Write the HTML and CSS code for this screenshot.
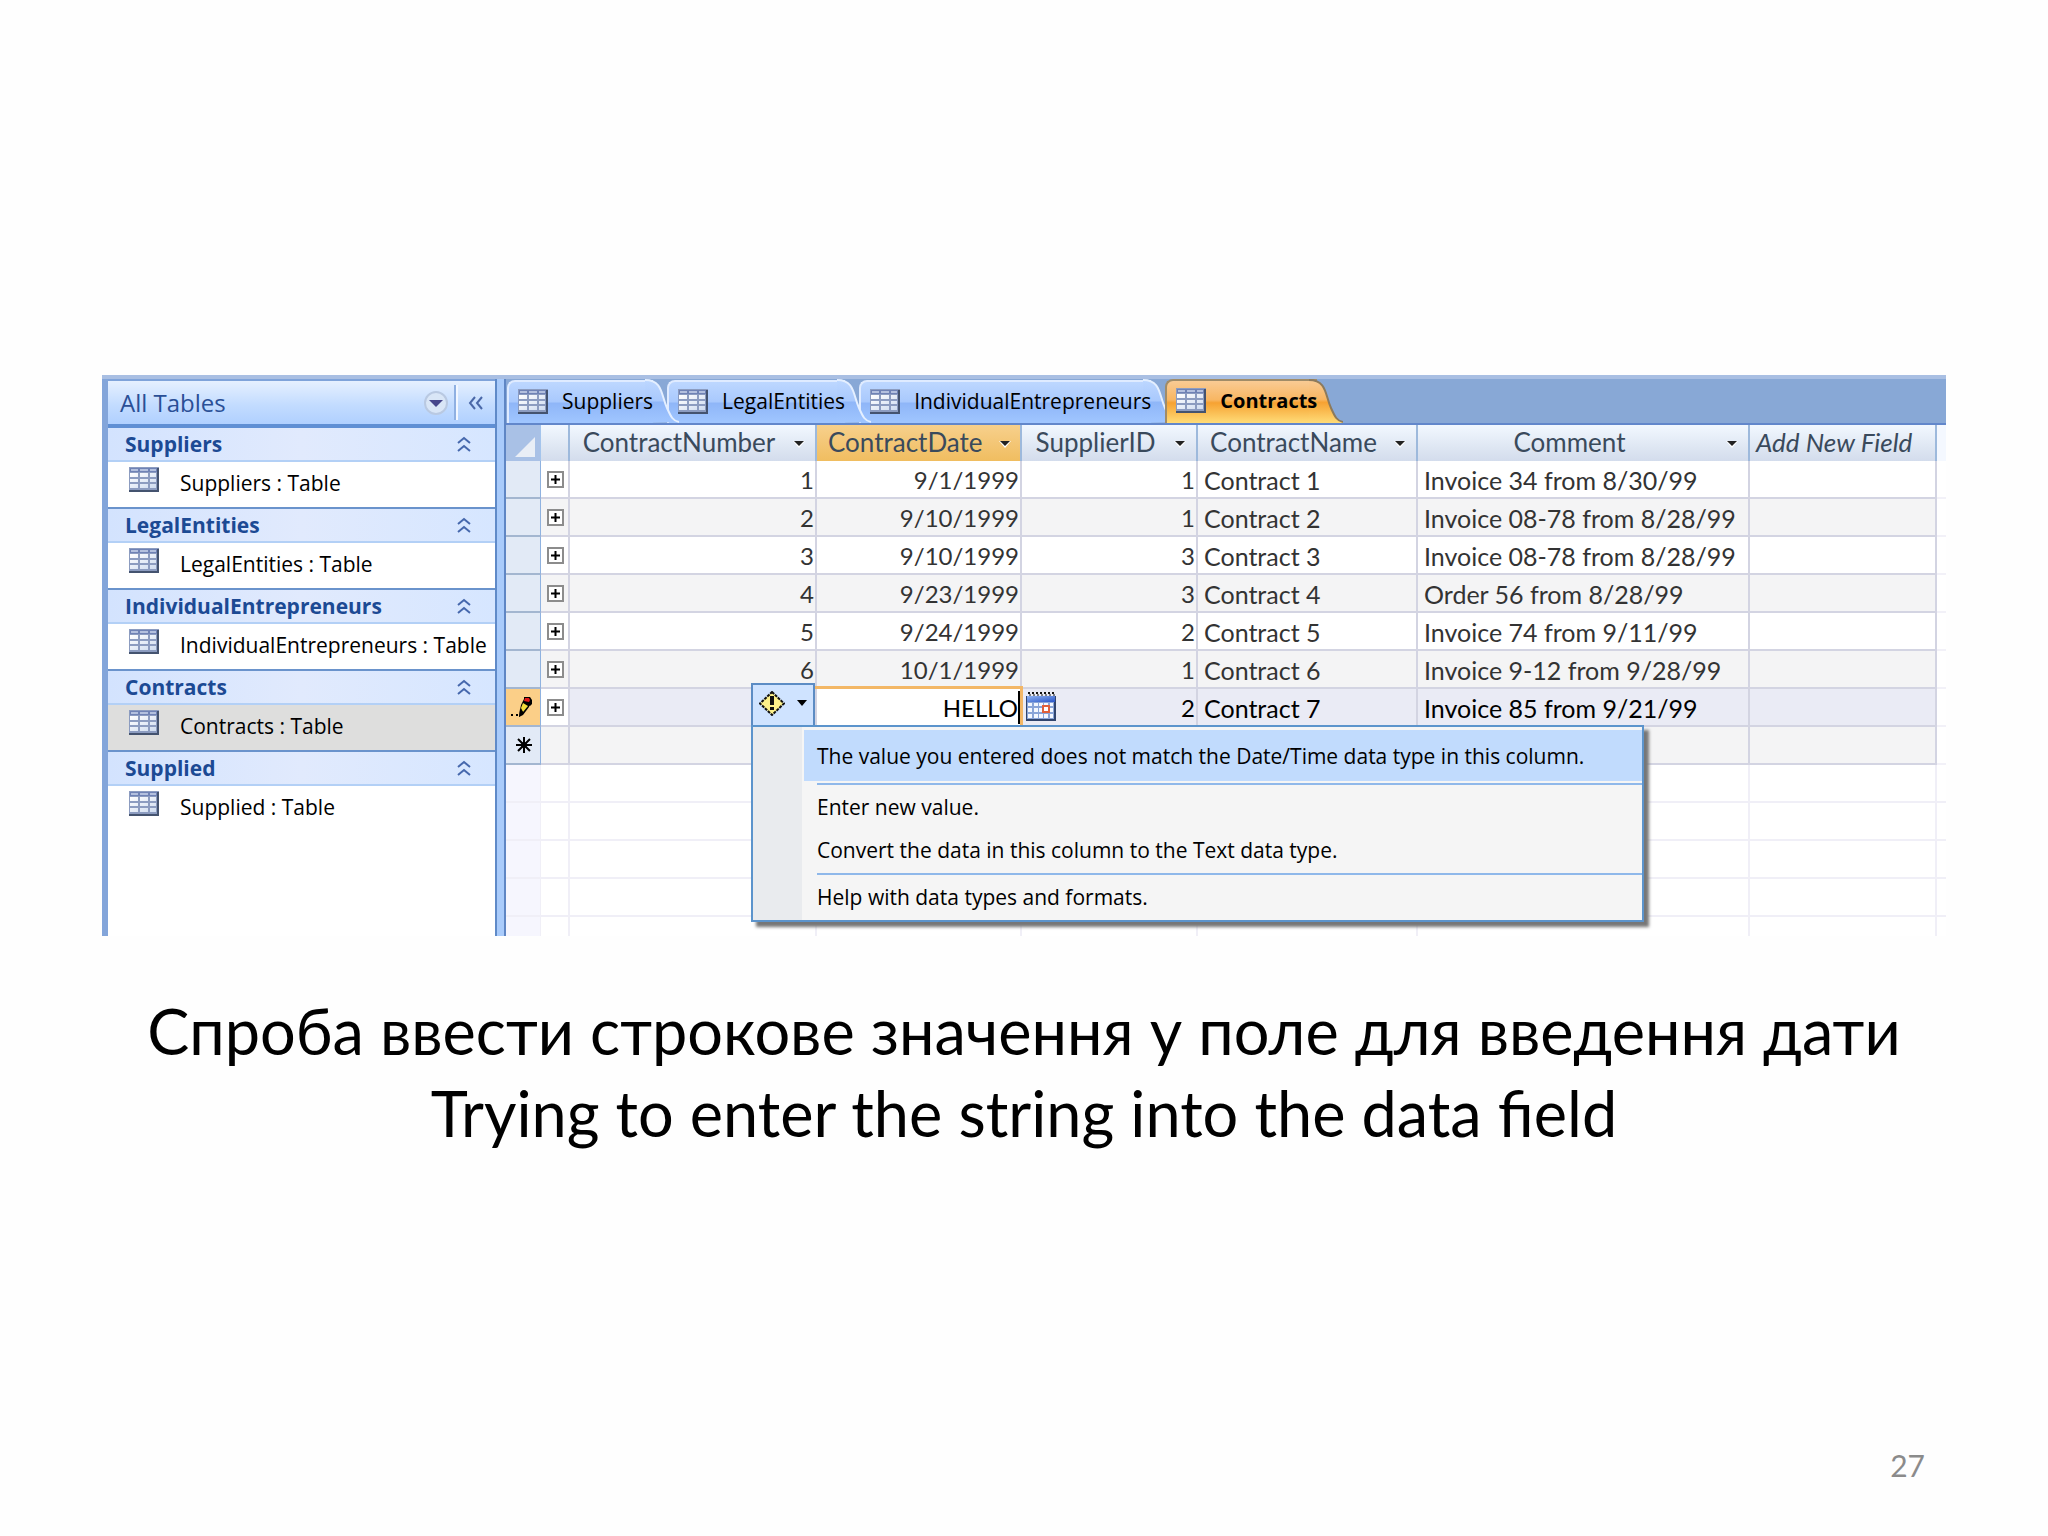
FILE: index.html
```html
<!DOCTYPE html>
<html lang="uk">

<head>
    <meta charset="UTF-8">
    <meta name="viewport" content="width=device-width, initial-scale=1.0">
    <title>Contracts</title>
    <link rel="stylesheet" href="styles.css">
</head>

<body>
    <!-- shared icons -->
    <svg class="defs" width="0" height="0" aria-hidden="true">
        <defs>
            <linearGradient id="tabBlue" x1="0" y1="0" x2="0" y2="1">
                <stop offset="0" stop-color="#bdd7ff" />
                <stop offset="0.48" stop-color="#a9c9fd" />
                <stop offset="0.52" stop-color="#8fb6f8" />
                <stop offset="1" stop-color="#a0c6ff" />
            </linearGradient>
            <linearGradient id="tabOrange" x1="0" y1="0" x2="0" y2="1">
                <stop offset="0" stop-color="#f9cb94" />
                <stop offset="0.45" stop-color="#f8b662" />
                <stop offset="0.52" stop-color="#f6a232" />
                <stop offset="1" stop-color="#ffdc78" />
            </linearGradient>
            <linearGradient id="calTop" x1="0" y1="0" x2="1" y2="1">
                <stop offset="0" stop-color="#8fb2f2" />
                <stop offset="1" stop-color="#2a56c8" />
            </linearGradient>
            <linearGradient id="gridCell" x1="0" y1="0" x2="1" y2="1">
                <stop offset="0" stop-color="#ffffff" />
                <stop offset="1" stop-color="#cfdcf0" />
            </linearGradient>
        </defs>
        <symbol id="icon-table" viewBox="0 0 30 25">
            <rect width="30" height="25" fill="#8c9cc0" />
            <rect x="1" y="1" width="28" height="4" fill="#6f82b5" />
            <path d="M2 2h7v2h-7zM11 2h8v2h-8zM21 2h6v2h-6z" fill="#b3c0de" />
            <path d="M1 6h8v4h-8zM11 6h8v4h-8zM21 6h6v4h-6zM1 12h8v3h-8zM11 12h8v3h-8zM21 12h6v3h-6zM1 17h8v4h-8zM11 17h8v4h-8zM21 17h6v4h-6z" fill="url(#gridCell)" />
            <path d="M28 1h2v24h-30v-2h28z" fill="#44536f" />
        </symbol>
        <symbol id="icon-up" viewBox="0 0 14 16">
            <path d="M1 7l6-5 6 5M1 15l6-5 6 5" fill="none" stroke="#4668ad" stroke-width="2" />
        </symbol>
        <symbol id="icon-arrow" viewBox="0 0 12 8">
            <path d="M0 1h12l-6 7z" fill="#fff" />
            <path d="M1 1h10l-5 5z" fill="#222" />
        </symbol>
        <symbol id="icon-plus" viewBox="0 0 17 17">
            <rect x="1" y="1" width="15" height="15" fill="#fff" stroke="#8c8c8c" stroke-width="2" />
            <path d="M4 8.5h9M8.500 4v9" stroke="#000" stroke-width="2" />
        </symbol>
    </svg>

    <main class="slide">
        <section class="screen">
            <nav class="nav">
                <div class="nav-title">
                    <h2>All Tables</h2>
                    <button class="round" aria-label="Filter">
                        <svg width="24" height="24" viewBox="0 0 24 24">
                            <circle cx="12" cy="12" r="11" fill="#d9e6f7" stroke="#b9c9e2" stroke-width="2" />
                            <path d="M5 9h14l-7 7z" fill="#46468c" />
                        </svg>
                    </button>
                    <button class="shutter" aria-label="Hide">
                        <svg width="16" height="14" viewBox="0 0 16 14">
                            <path d="M7 1l-5 6 5 6M14 1l-5 6 5 6" fill="none" stroke="#4a68a8" stroke-width="2" />
                        </svg>
                    </button>
                </div>
                <div class="group">
                    <button class="group-head">Suppliers <svg width="14" height="16"><use href="#icon-up" /></svg></button>
                    <a class="group-item" href="#suppliers"><svg width="30" height="25"><use href="#icon-table" /></svg>Suppliers : Table</a>
                </div>
                <div class="group">
                    <button class="group-head">LegalEntities <svg width="14" height="16"><use href="#icon-up" /></svg></button>
                    <a class="group-item" href="#legal"><svg width="30" height="25"><use href="#icon-table" /></svg>LegalEntities : Table</a>
                </div>
                <div class="group">
                    <button class="group-head">IndividualEntrepreneurs <svg width="14" height="16"><use href="#icon-up" /></svg></button>
                    <a class="group-item" href="#individual"><svg width="30" height="25"><use href="#icon-table" /></svg>IndividualEntrepreneurs : Table</a>
                </div>
                <div class="group">
                    <button class="group-head">Contracts <svg width="14" height="16"><use href="#icon-up" /></svg></button>
                    <a class="group-item selected" href="#contracts"><svg width="30" height="25"><use href="#icon-table" /></svg>Contracts : Table</a>
                </div>
                <div class="group">
                    <button class="group-head">Supplied <svg width="14" height="16"><use href="#icon-up" /></svg></button>
                    <a class="group-item" href="#supplied"><svg width="30" height="25"><use href="#icon-table" /></svg>Supplied : Table</a>
                </div>
            </nav>

            <div class="splitter"></div>

            <div class="document">
                <div class="tabs">
                    <button class="tab"><svg class="tab-icon" width="30" height="25"><use href="#icon-table" /></svg><span>Suppliers</span>
                        <svg class="tab-end" width="34" height="44" viewBox="0 0 34 44"><path d="M0 1C18 1 16 16 22 29C26 38 28 42 34 43L0 44z" fill="url(#tabBlue)" /><path d="M0 1C18 1 16 16 22 29C26 38 28 42 34 43" fill="none" stroke="#e4efff" stroke-width="2" /></svg></button>
                    <button class="tab"><svg class="tab-icon" width="30" height="25"><use href="#icon-table" /></svg><span>LegalEntities</span>
                        <svg class="tab-end" width="34" height="44" viewBox="0 0 34 44"><path d="M0 1C18 1 16 16 22 29C26 38 28 42 34 43L0 44z" fill="url(#tabBlue)" /><path d="M0 1C18 1 16 16 22 29C26 38 28 42 34 43" fill="none" stroke="#e4efff" stroke-width="2" /></svg></button>
                    <button class="tab"><svg class="tab-icon" width="30" height="25"><use href="#icon-table" /></svg><span>IndividualEntrepreneurs</span>
                        <svg class="tab-end" width="34" height="44" viewBox="0 0 34 44"><path d="M0 1C18 1 16 16 22 29C26 38 28 42 34 43L0 44z" fill="url(#tabBlue)" /><path d="M0 1C18 1 16 16 22 29C26 38 28 42 34 43" fill="none" stroke="#e4efff" stroke-width="2" /></svg></button>
                    <button class="tab active"><svg class="tab-icon" width="30" height="25"><use href="#icon-table" /></svg><span>Contracts</span>
                        <svg class="tab-end" width="34" height="44" viewBox="0 0 34 44"><path d="M0 1C18 1 16 16 22 29C26 38 28 42 34 43V44H0z" fill="url(#tabOrange)" /><path d="M0 1C18 1 16 16 22 29C26 38 28 42 34 43" fill="none" stroke="#8c7a5c" stroke-width="2" /></svg></button>
                </div>

                <table class="sheet">
                    <colgroup>
                        <col class="c-select">
                        <col class="c-expand">
                        <col class="c-number">
                        <col class="c-date">
                        <col class="c-supplier">
                        <col class="c-name">
                        <col class="c-comment">
                        <col class="c-add">
                        <col>
                    </colgroup>
                    <thead>
                        <tr>
                            <th class="corner"><svg width="20" height="20" viewBox="0 0 20 20"><path d="M20 0v20H0z" fill="#e9eef6" /></svg></th>
                            <th></th>
                            <th><div class="head"><span>ContractNumber</span><button aria-label="Sort ContractNumber"><svg width="12" height="8"><use href="#icon-arrow" /></svg></button></div></th>
                            <th class="current"><div class="head"><span>ContractDate</span><button aria-label="Sort ContractDate"><svg width="12" height="8"><use href="#icon-arrow" /></svg></button></div></th>
                            <th><div class="head"><span>SupplierID</span><button aria-label="Sort SupplierID"><svg width="12" height="8"><use href="#icon-arrow" /></svg></button></div></th>
                            <th><div class="head"><span>ContractName</span><button aria-label="Sort ContractName"><svg width="12" height="8"><use href="#icon-arrow" /></svg></button></div></th>
                            <th><div class="head"><span>Comment</span><button aria-label="Sort Comment"><svg width="12" height="8"><use href="#icon-arrow" /></svg></button></div></th>
                            <th class="add">Add New Field</th>
                            <th class="rest"></th>
                        </tr>
                    </thead>
                    <tbody>
                        <tr>
                            <td></td>
                            <td><button class="expand" aria-label="Expand"><svg width="17" height="17"><use href="#icon-plus" /></svg></button></td>
                            <td class="num">1</td><td class="num">9/1/1999</td><td class="num">1</td>
                            <td>Contract 1</td><td>Invoice 34 from 8/30/99</td><td></td><td></td>
                        </tr>
                        <tr class="alt">
                            <td></td>
                            <td><button class="expand" aria-label="Expand"><svg width="17" height="17"><use href="#icon-plus" /></svg></button></td>
                            <td class="num">2</td><td class="num">9/10/1999</td><td class="num">1</td>
                            <td>Contract 2</td><td>Invoice 08-78 from 8/28/99</td><td></td><td></td>
                        </tr>
                        <tr>
                            <td></td>
                            <td><button class="expand" aria-label="Expand"><svg width="17" height="17"><use href="#icon-plus" /></svg></button></td>
                            <td class="num">3</td><td class="num">9/10/1999</td><td class="num">3</td>
                            <td>Contract 3</td><td>Invoice 08-78 from 8/28/99</td><td></td><td></td>
                        </tr>
                        <tr class="alt">
                            <td></td>
                            <td><button class="expand" aria-label="Expand"><svg width="17" height="17"><use href="#icon-plus" /></svg></button></td>
                            <td class="num">4</td><td class="num">9/23/1999</td><td class="num">3</td>
                            <td>Contract 4</td><td>Order 56 from 8/28/99</td><td></td><td></td>
                        </tr>
                        <tr>
                            <td></td>
                            <td><button class="expand" aria-label="Expand"><svg width="17" height="17"><use href="#icon-plus" /></svg></button></td>
                            <td class="num">5</td><td class="num">9/24/1999</td><td class="num">2</td>
                            <td>Contract 5</td><td>Invoice 74 from 9/11/99</td><td></td><td></td>
                        </tr>
                        <tr class="alt">
                            <td></td>
                            <td><button class="expand" aria-label="Expand"><svg width="17" height="17"><use href="#icon-plus" /></svg></button></td>
                            <td class="num">6</td><td class="num">10/1/1999</td><td class="num">1</td>
                            <td>Contract 6</td><td>Invoice 9-12 from 9/28/99</td><td></td><td></td>
                        </tr>
                        <tr class="editing">
                            <td class="pencil">
                                <svg width="22" height="22" viewBox="0 0 22 22">
                                    <path d="M10 9l3-6 7 3-2 5-6 8-4 2 1-7z" fill="#000" />
                                    <path d="M13 1h6l2 3v4l-2 2-6-3z" fill="#000" />
                                    <path d="M14 2h4l1 2-1 2-5-1z" fill="#e01818" />
                                    <path d="M12 7l5 3-5 6-1-2-1-2z" fill="#f3dc3a" />
                                    <path d="M9 13l4 4-5 4z" fill="#000" />
                                    <path d="M0 18h2v2h-2zM5 18h2v2h-2z" fill="#000" />
                                </svg>
                            </td>
                            <td><button class="expand" aria-label="Expand"><svg width="17" height="17"><use href="#icon-plus" /></svg></button></td>
                            <td class="tagged">
                                <button class="smart-tag" aria-label="Error options">
                                    <svg width="26" height="25" viewBox="0 0 26 25">
                                        <path d="M13 1l12 11.500-12 11.500-12-11.500z" fill="#fdf08a" stroke="#111" stroke-width="2" stroke-dasharray="3 1" />
                                        <path d="M11 5h4v9h-4zM11 16h4v3h-4z" fill="#111" />
                                    </svg>
                                    <svg width="10" height="6" viewBox="0 0 10 6"><path d="M0 0h10l-5 6z" fill="#000" /></svg>
                                </button>
                                <div class="menu" role="menu">
                                    <button class="hot" role="menuitem">The value you entered does not match the Date/Time data type in this column.</button>
                                    <hr>
                                    <button role="menuitem">Enter new value.</button>
                                    <button role="menuitem">Convert the data in this column to the Text data type.</button>
                                    <hr>
                                    <button role="menuitem">Help with data types and formats.</button>
                                </div>
                            </td>
                            <td class="edit"><div class="edit-box"><input type="text" value="HELLO" aria-label="ContractDate"><i class="caret"></i></div></td>
                            <td class="num"><div class="picker">
                                <button aria-label="Pick a date">
                                    <svg width="30" height="29" viewBox="0 0 30 29">
                                        <path d="M2 1h26" stroke="#111" stroke-width="2" stroke-dasharray="2 2" />
                                        <path d="M3 3h26" stroke="#111" stroke-width="1" stroke-dasharray="2 2" />
                                        <rect y="4" width="30" height="25" fill="#31456e" />
                                        <rect x="1" y="4" width="28" height="6" fill="url(#calTop)" />
                                        <rect x="1" y="10" width="27" height="17" fill="#8aa5d8" />
                                        <path d="M2 11h4v3h-4zM8 11h4v3h-4zM13 11h4v3h-4zM18 11h4v3h-4zM24 11h3v3h-3zM2 16h4v4h-4zM8 16h4v4h-4zM13 16h4v4h-4zM24 16h3v4h-3zM2 22h4v4h-4zM8 22h4v4h-4zM13 22h4v4h-4zM18 22h4v4h-4zM24 22h3v4h-3z" fill="#f4f8ff" />
                                        <rect x="17" y="14" width="6" height="6" fill="#fff" stroke="#e0603a" stroke-width="2" />
                                    </svg>
                                </button>
                                <span>2</span>
                            </div></td>
                            <td>Contract 7</td><td>Invoice 85 from 9/21/99</td><td></td><td></td>
                        </tr>
                        <tr class="alt new">
                            <td class="star">
                                <svg width="18" height="18" viewBox="0 0 18 18"><path d="M9 1v16M1 9h16M3 3l12 12M15 3l-12 12" stroke="#000" stroke-width="2" /><circle cx="9" cy="9" r="3" /></svg>
                            </td>
                            <td></td><td></td><td></td><td></td><td></td><td></td><td></td><td></td>
                        </tr>
                        <tr class="blank"><td></td><td></td><td></td><td></td><td></td><td></td><td></td><td></td><td></td></tr>
                        <tr class="blank"><td></td><td></td><td></td><td></td><td></td><td></td><td></td><td></td><td></td></tr>
                        <tr class="blank"><td></td><td></td><td></td><td></td><td></td><td></td><td></td><td></td><td></td></tr>
                        <tr class="blank"><td></td><td></td><td></td><td></td><td></td><td></td><td></td><td></td><td></td></tr>
                        <tr class="blank last"><td></td><td></td><td></td><td></td><td></td><td></td><td></td><td></td><td></td></tr>
                    </tbody>
                </table>
            </div>
        </section>

        <h1 class="caption">Спроба ввести строкове значення у поле для введення дати<br>Trying to enter the string into the data field</h1>

        <footer class="page-number">27</footer>
    </main>
</body>

</html>
```
FILE: styles.css
```css
* {
    box-sizing: border-box;
}

body {
    margin: 0;
    background-color: #fefefe;
    font-family: Lato, "Open Sans", sans-serif;
    color: #000;
}

button {
    margin: 0;
    padding: 0;
    border: none;
    background: none;
    font: inherit;
    color: inherit;
    cursor: pointer;
}

svg {
    display: block;
    flex: none;
}

.defs {
    position: absolute;
}

.slide {
    display: flex;
    flex-direction: column;
    min-height: 100vh;
    padding: 375px 102px 45px;
}

.screen {
    display: flex;
    border-top: 4px solid #a9bfe3;
    background-color: #fff;
}

/* navigation pane */
.nav {
    flex: none;
    width: 395px;
    border-left: 6px solid #83a5da;
    border-right: 2px solid #5f8ac8;
    font-family: "Open Sans", sans-serif;
    font-size: 21px;
}

.nav-title {
    display: flex;
    align-items: center;
    height: 49px;
    padding-left: 12px;
    border-top: 2px solid #7fa3da;
    border-bottom: 4px solid #5f8fd4;
    background: linear-gradient(#e6f0ff, #c3dcff 55%, #b0d0ff);
    color: #2a4f96;
}

.nav-title h2 {
    flex: 1;
    margin: 0;
    font-size: 24px;
    font-weight: 400;
}

.shutter {
    display: flex;
    align-items: center;
    height: 35px;
    margin-left: 6px;
    padding: 0 11px 0 12px;
    border-left: 2px solid #8fb0e2;
    box-shadow: inset 2px 0 #f2f7ff;
}

.group + .group {
    border-top: 2px solid #6a93cc;
}

.group-head {
    display: flex;
    align-items: center;
    justify-content: space-between;
    width: 100%;
    height: 34px;
    padding: 0 24px 0 17px;
    border-bottom: 2px solid #b3d0f6;
    background: linear-gradient(90deg, #d3e3fe, #e1eafd 50%, #d6e6ff);
    color: #1c4a94;
    font-weight: 700;
}

.group-item {
    display: flex;
    align-items: center;
    gap: 21px;
    height: 45px;
    padding: 0 0 4px 21px;
    color: #000;
    text-decoration: none;
    white-space: nowrap;
}

.group-item svg {
    margin-bottom: 6px;
}

.group-item.selected {
    background-color: #dededd;
}

.splitter {
    flex: none;
    width: 9px;
    border-right: 2px solid #5f86c4;
    background-color: #a9cbfb;
}

/* document tabs */
.document {
    flex: 1;
    min-width: 0;
}

.tabs {
    display: flex;
    align-items: flex-end;
    height: 46px;
    padding-left: 1px;
    border-bottom: 2px solid #6287cb;
    background-color: #88a8d6;
    font-family: "Open Sans", sans-serif;
    font-size: 21px;
}

.tab {
    display: flex;
    align-items: center;
    position: relative;
    height: 43px;
    margin-right: 14px;
    padding: 0 0 3px 9px;
    border-top: 2px solid #dfebff;
    border-left: 2px solid #dfebff;
    border-radius: 8px 0 0 0;
    background: linear-gradient(#bdd7ff, #a9c9fd 48%, #8fb6f8 52%, #a0c6ff);
}

.tab span {
    position: relative;
    z-index: 1;
    padding-left: 14px;
}

/* sloped right edge, hangs over the next tab */
.tab-end {
    position: absolute;
    left: calc(100% - 8px);
    bottom: 0;
}

.tab:nth-child(1) {
    z-index: 3;
}

.tab:nth-child(2) {
    z-index: 2;
}

.tab.active {
    z-index: 4;
    height: 44px;
    border-color: #a08c68;
    background: linear-gradient(#f9cb94, #f8b662 45%, #f6a232 52%, #ffdc78);
    font-size: 20px;
    font-weight: 700;
}

/* datasheet */
.sheet {
    width: 100%;
    table-layout: fixed;
    border-collapse: separate;
    border-spacing: 0;
    font-size: 25px;
    line-height: 28px;
    color: #333;
}

.c-select { width: 35px; }
.c-expand { width: 29px; }
.c-number { width: 247px; }
.c-date { width: 205px; }
.c-supplier { width: 176px; }
.c-name { width: 220px; }
.c-comment { width: 332px; }
.c-add { width: 187px; }

.sheet th {
    height: 36px;
    padding: 0 0 2px;
    border-right: 2px solid #9db9dc;
    background: linear-gradient(#f2f8ff, #dfe7f3 60%, #d3dcec);
    color: #3a4a5c;
    font-size: 26px;
    font-weight: 400;
    white-space: nowrap;
}

.sheet th.corner {
    padding: 8px 5px 0 9px;
    border-right: 1px solid #a4c4ec;
    background: #a9c1e6;
}

.sheet th.current {
    background: linear-gradient(#f7d08c, #f0bd60);
}

.sheet th.add {
    padding-left: 6px;
    font-style: italic;
    text-align: left;
}

.sheet th.rest {
    border: none;
    background: #f4f8ff;
}

.head {
    display: flex;
    align-items: center;
    gap: 16px;
    padding: 0 10px 0 11px;
}

.head span {
    flex: 1;
}

.head button {
    padding-top: 4px;
}

.sheet td {
    height: 38px;
    padding: 2px 6px 0;
    border-right: 2px solid #d3d4e2;
    border-bottom: 2px solid #d3d4e2;
    white-space: nowrap;
}

.sheet td:first-child {
    padding: 0;
    border-right: 1px solid #8fb2e0;
    border-bottom-color: #a3b6d0;
    background-color: #e2eaf6;
}

.sheet td:nth-child(2) {
    padding: 0 6px;
}

.sheet td:last-child {
    padding: 0;
    border-right: none;
    border-bottom-color: #f2f1f8;
    background: none;
}

.sheet .num {
    padding-right: 1px;
    font-size: 24px;
    text-align: right;
}

.alt td {
    background-color: #f4f4f5;
}

.expand {
    display: block;
}

.editing td {
    background-color: #eaebf5;
    color: #000;
}

.editing td:nth-child(2) {
    background-color: #fff;
}

.sheet td.pencil {
    padding-left: 5px;
    background-color: #fbcf88;
}

.sheet td.star {
    padding-left: 9px;
}

.sheet .edit {
    padding: 0;
}

.edit-box {
    display: flex;
    height: 36px;
    outline: 3px solid #f3b766;
    background-color: #fff;
}

.edit-box input {
    flex: 1;
    min-width: 0;
    padding: 2px 0 0;
    border: none;
    outline: none;
    background: none;
    font: inherit;
    font-size: 24px;
    color: #000;
    text-align: right;
}

.caret {
    width: 2px;
    margin: 2px 0 1px;
    background-color: #000;
}

.picker {
    display: flex;
    align-items: center;
    justify-content: space-between;
    margin-left: -2px;
}

.picker button {
    margin: -2px 0 2px;
}

.blank td,
.sheet .blank td:first-child {
    border-color: #f0eff7;
}

.sheet .blank td {
    border-color: #f0eff7;
}

.sheet .blank td:first-child {
    background-color: #f6f6fe;
}

.sheet .blank.last td {
    height: 19px;
    border-bottom: none;
}

/* error smart tag and its menu */
.tagged {
    position: relative;
}

.smart-tag {
    position: absolute;
    top: -6px;
    right: 0;
    display: flex;
    align-items: center;
    justify-content: space-between;
    width: 64px;
    height: 44px;
    padding: 0 6px 4px;
    border: 2px solid #5c8cc4;
    background-color: #cfe3ff;
}

.menu {
    position: absolute;
    z-index: 5;
    top: 36px;
    left: 181px;
    width: 893px;
    padding: 3px 0 2px 51px;
    border: 2px solid #5c94cc;
    background: linear-gradient(90deg, #e9ebee 49px, #f5f5f5 49px);
    box-shadow: 5px 5px 3px #777;
    font-family: "Open Sans", sans-serif;
    font-size: 21px;
}

.menu button {
    display: block;
    width: 100%;
    height: 43px;
    padding-left: 13px;
    text-align: left;
}

.menu .hot {
    height: 51px;
    background-color: #c1dbfd;
}

.menu hr {
    height: 2px;
    margin: 2px 0 0 13px;
    border: none;
    background-color: #8fb8ea;
}

.caption {
    margin: 54px 0 0;
    font-size: 63px;
    font-weight: 400;
    line-height: 82px;
    text-align: center;
}

.page-number {
    margin-top: auto;
    padding-right: 21px;
    color: #8b8b8b;
    font-size: 30px;
    line-height: 52px;
    text-align: right;
}
```
